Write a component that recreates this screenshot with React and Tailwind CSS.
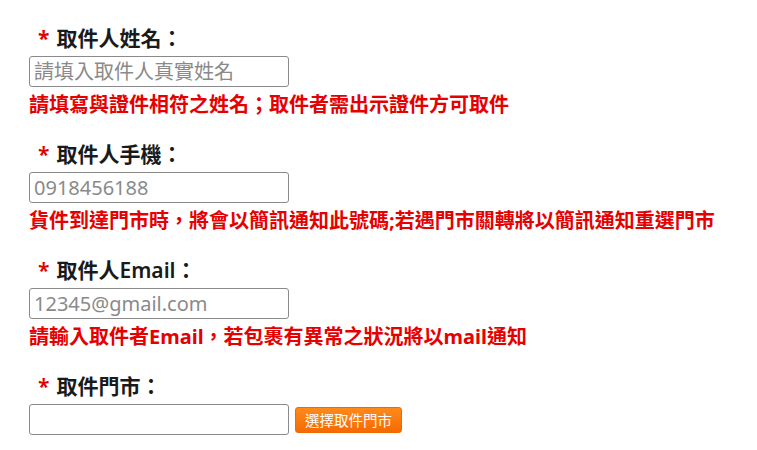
import React from "react";

const FONT = "font-['Noto_Sans','Noto_Sans_CJK_TC',sans-serif]";

function Field({ label, placeholder, hint, bold, children }) {
  return (
    <div className="mb-[21px]">
      <div className={`ml-[9px] h-[28px] leading-[28px] text-[21px] text-[#1a1a1a] ${bold ? "font-bold" : "font-semibold"}`}>
        <span className="text-[#e00000] mr-[7px]">*</span>
        {label}
      </div>
      {children || (
        <input
          type="text"
          placeholder={placeholder}
          className="mt-[4px] block h-[31px] w-[260px] rounded-[3px] border border-[#8a8a8a] bg-white px-[4px] text-[20px] text-[#333] placeholder:text-[#8a8a8a] outline-none"
        />
      )}
      {hint && (
        <div className="mt-[4px] h-[28px] leading-[28px] text-[20px] font-bold text-[#e60000] whitespace-nowrap">
          {hint}
        </div>
      )}
    </div>
  );
}

export default function App() {
  return (
    <div className={`min-h-[450px] w-[757px] bg-white pl-[29px] pt-[24px] ${FONT}`}>
      <Field
        bold
        label="取件人姓名："
        placeholder="請填入取件人真實姓名"
        hint="請填寫與證件相符之姓名；取件者需出示證件方可取件"
      />
      <Field
        label="取件人手機："
        placeholder="0918456188"
        hint="貨件到達門市時，將會以簡訊通知此號碼;若遇門市關轉將以簡訊通知重選門市"
      />
      <Field
        label="取件人Email："
        placeholder="12345@gmail.com"
        hint="請輸入取件者Email，若包裹有異常之狀況將以mail通知"
      />
      <Field label="取件門市：">
        <div className="mt-[4px] flex items-center">
          <input
            type="text"
            className="block h-[31px] w-[260px] rounded-[3px] border border-[#8a8a8a] bg-white px-[4px] text-[20px] outline-none"
          />
          <button
            type="button"
            className="ml-[6px] h-[26px] rounded-[3px] border border-[#f06a00] bg-gradient-to-b from-[#ff8a1a] to-[#f56a00] px-[9px] text-[14.5px] leading-[24px] text-white"
          >
            選擇取件門市
          </button>
        </div>
      </Field>
    </div>
  );
}
